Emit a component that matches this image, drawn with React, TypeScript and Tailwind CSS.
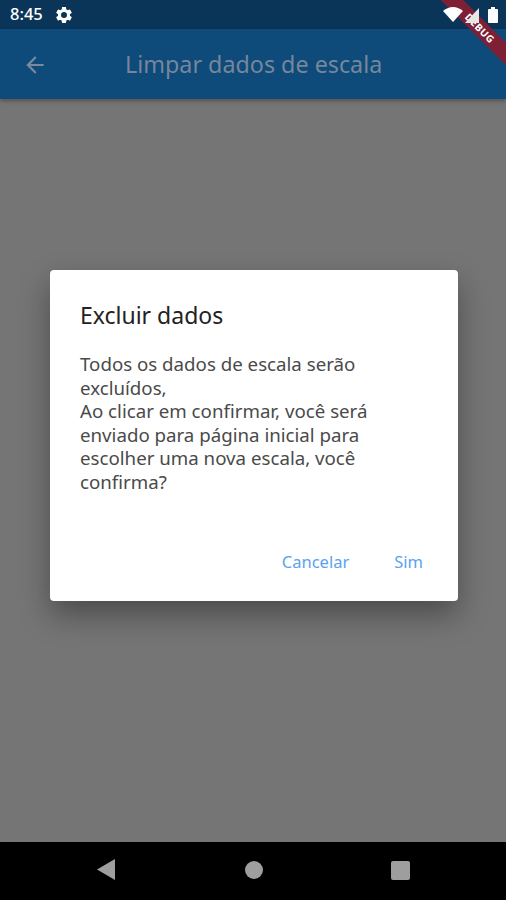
import React from "react";

const font = { fontFamily: '"Noto Sans", sans-serif' };

function Gear() {
  return (
    <svg width="20" height="20" viewBox="0 0 24 24" fill="#fff">
      <path d="M19.14 12.94c.04-.3.06-.61.06-.94 0-.32-.02-.64-.07-.94l2.03-1.58a.49.49 0 0 0 .12-.61l-1.92-3.32a.49.49 0 0 0-.59-.22l-2.39.96c-.5-.38-1.03-.7-1.62-.94l-.36-2.54a.48.48 0 0 0-.48-.41h-3.84c-.24 0-.43.17-.47.41l-.36 2.54c-.59.24-1.13.57-1.62.94l-2.39-.96a.48.48 0 0 0-.59.22L2.74 8.87c-.12.21-.08.47.12.61l2.03 1.58c-.05.3-.09.63-.09.94s.02.64.07.94l-2.03 1.58a.49.49 0 0 0-.12.61l1.92 3.32c.12.22.37.29.59.22l2.39-.96c.5.38 1.03.7 1.62.94l.36 2.54c.05.24.24.41.48.41h3.84c.24 0 .44-.17.47-.41l.36-2.54c.59-.24 1.13-.56 1.62-.94l2.39.96c.22.08.47 0 .59-.22l1.92-3.32c.12-.22.07-.47-.12-.61l-2.01-1.58zM12 15.6A3.6 3.6 0 1 1 12 8.4a3.6 3.6 0 0 1 0 7.2z" />
    </svg>
  );
}

export default function App() {
  return (
    <div className="relative w-[506px] h-[900px] overflow-hidden flex flex-col bg-[#757575]" style={font}>
      <div className="h-[29px] shrink-0 bg-[#0a3559] flex items-center pl-[10px] gap-[11px]">
        <span className="text-[16.5px] leading-none text-white font-medium">8:45</span>
        <Gear />
      </div>
      <div className="h-[70px] shrink-0 bg-[#0e4a7a] flex items-center pl-[22px] pt-[1px] shadow-[0_2px_4px_rgba(0,0,0,0.3)]">
        <svg width="26" height="26" viewBox="0 0 24 24" fill="#7a8a9c">
          <path d="M20 11H7.83l5.59-5.59L12 4l-8 8 8 8 1.41-1.41L7.83 13H20v-2z" />
        </svg>
        <span className="ml-[77px] text-[23.3px] leading-none text-[#75879b]">Limpar dados de escala</span>
      </div>
      <div className="flex-1 flex items-start justify-center pl-[2px] pt-[171px]">
        <div className="w-[408px] h-[331px] bg-white rounded-[4px] shadow-[0_14px_30px_rgba(0,0,0,0.35)] flex flex-col pt-[30px] pl-[30px] pr-[35px] pb-[29px]">
          <h1 className="text-[23px] leading-[30px] text-[#222222] font-normal">Excluir dados</h1>
          <p className="mt-[22px] text-[18.7px] leading-[23.5px] text-[#4a4a4a] whitespace-nowrap">
            Todos os dados de escala serão
            <br />
            excluídos,
            <br />
            Ao clicar em confirmar, você será
            <br />
            enviado para página inicial para
            <br />
            escolher uma nova escala, você
            <br />
            confirma?
          </p>
          <div className="mt-auto flex justify-end gap-[45px] text-[16.5px] leading-[20px] text-[#5ba3ee]">
            <span>Cancelar</span>
            <span>Sim</span>
          </div>
        </div>
      </div>
      <div className="h-[58px] shrink-0 bg-black flex items-center pl-[97px] pb-[2px]">
        <svg width="18" height="22" viewBox="0 0 18 22" fill="#9e9e9e"><path d="M18 0v21L0 10.5z" /></svg>
        <div className="ml-[130px] w-[18px] h-[18px] rounded-full bg-[#9e9e9e]" />
        <div className="ml-[128px] w-[19px] h-[19px] rounded-[2px] bg-[#9e9e9e]" />
      </div>

      {/* debug banner */}
      <div className="absolute left-[425px] top-[20px] w-[110px] h-[16px] rotate-45 bg-[#7d2036] flex items-center justify-center">
        <span className="text-[10px] leading-none font-bold text-white tracking-[0.5px]">DEBUG</span>
      </div>

      {/* status icons, drawn by the system above the app */}
      <svg className="absolute left-[443px] top-[7px]" width="20" height="15" viewBox="0 0 20 15" fill="#fff"><path d="M0 4Q10-4 20 4L10 15z" /></svg>
      <svg className="absolute left-[465px] top-[8px]" width="15" height="15" viewBox="0 0 15 15" fill="#e6e6e6"><path d="M14 0v15H0z" /></svg>
      <div className="absolute left-[488px] top-[9px] w-[10px] h-[14px] rounded-[1px] bg-white" />
      <div className="absolute left-[491px] top-[7px] w-[4px] h-[3px] bg-white" />
    </div>
  );
}
